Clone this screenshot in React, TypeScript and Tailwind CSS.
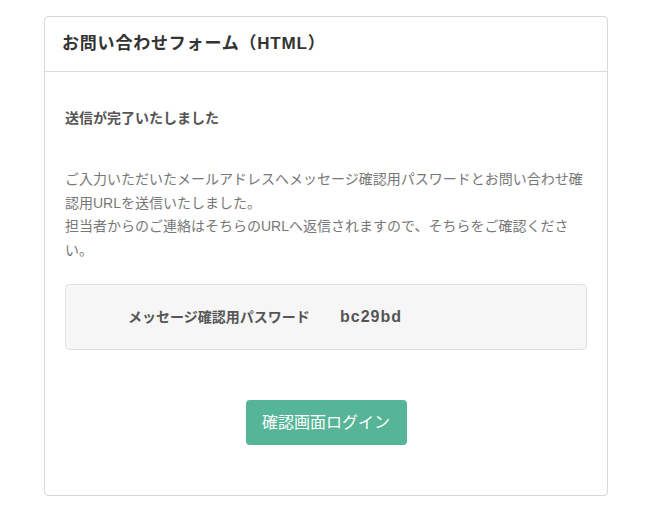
import React from "react";

export default function App() {
  const font = { fontFamily: '"Liberation Sans", "Noto Sans CJK JP", sans-serif' };
  return (
    <div className="min-h-[518px] bg-white pt-4" style={font}>
      <div className="ml-[44px] w-[564px] rounded border border-[#d8d8d8] bg-white">
        <div className="flex h-[55px] items-center border-b border-[#dcdcdc] px-[17px]">
          <h1 className="text-[17px] font-bold tracking-[0.8px] text-[#333]">お問い合わせフォーム（HTML）</h1>
        </div>
        <div className="px-5 pb-[50px]">
          <p className="mt-[34px] text-[14px] font-bold leading-[24px] text-[#555]">送信が完了いたしました</p>
          <p className="mt-[38px] text-[14px] leading-[23.5px] text-[#777]">
            ご入力いただいたメールアドレスへメッセージ確認用パスワードとお問い合わせ確認用URLを送信いたしました。
            <br />
            担当者からのご連絡はそちらのURLへ返信されますので、そちらをご確認ください。
          </p>
          <div className="mt-[22px] flex h-[66px] items-center rounded border border-[#e2e2e2] bg-[#f6f6f6] pl-[62px]">
            <span className="w-[212px] text-[14px] font-bold text-[#555]">メッセージ確認用パスワード</span>
            <span className="text-[16px] font-bold tracking-[1px] text-[#555]">bc29bd</span>
          </div>
          <div className="mt-[50px] flex justify-center">
            <button className="h-[45px] w-[161px] rounded bg-[#57b597] text-[16px] text-white">確認画面ログイン</button>
          </div>
        </div>
      </div>
    </div>
  );
}
